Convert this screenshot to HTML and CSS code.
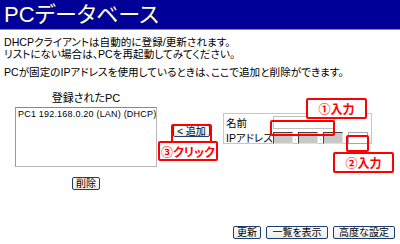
FILE: index.html
```html
<!DOCTYPE html>
<html lang="ja">

<head>
    <meta charset="UTF-8">
    <meta name="viewport" content="width=device-width, initial-scale=1.0">
    <title>PCデータベース</title>
    <link rel="stylesheet" href="styles.css">
</head>

<body>
    <div class="banner">
        <h1>PCデータベース</h1>
    </div>

    <div class="intro">
        <p>DHCPクライアントは自動的に登録/更新されます。<br>リストにない場合は、PCを再起動してみてください。</p>
        <p>PCが固定のIPアドレスを使用しているときは、ここで追加と削除ができます。</p>
    </div>

    <div class="editor">
        <div class="list-col">
            <div class="list-title">登録されたPC</div>
            <div class="listbox">PC1 192.168.0.20 (LAN) (DHCP)</div>
            <button class="btn delete-button">削除</button>
        </div>
        <div class="add-col">
            <button class="btn add-button">&lt; 追加</button>
        </div>
        <div class="entry">
            <div class="entry-row">
                <span class="entry-label">名前</span>
                <input class="name-input" type="text">
            </div>
            <div class="entry-row">
                <span class="entry-label">IPアドレス</span>
                <input class="ip-input fixed" type="text" disabled>
                <span class="dot">.</span>
                <input class="ip-input fixed" type="text" disabled>
                <span class="dot">.</span>
                <input class="ip-input fixed" type="text" disabled>
                <span class="dot"></span>
                <input class="ip-input" type="text">
            </div>
        </div>
    </div>

    <div class="actions">
        <button class="btn">更新</button>
        <button class="btn wide">一覧を表示</button>
        <button class="btn wide">高度な設定</button>
    </div>

    <!-- annotations drawn over the form -->
    <div class="mark mark-add"></div>
    <div class="mark mark-name"></div>
    <div class="mark mark-ip"></div>
    <div class="note note-name">①入力</div>
    <div class="note note-ip">②入力</div>
    <div class="note note-add">③クリック</div>
</body>

</html>
```

FILE: styles.css
```css
body {
    font-family: 'Liberation Sans', 'Noto Sans CJK JP', sans-serif;
    font-size: 11px;
    color: #000;
    background-color: #fff;
    margin: 0;
    padding: 0;
    width: 400px;
    height: 244px;
    overflow: hidden;
}

.banner {
    height: 29px;
    background-color: #000099;
    border-bottom: 1px solid #8080cc;
}

.banner h1 {
    margin: 0;
    padding-left: 4px;
    font-size: 22px;
    font-weight: normal;
    line-height: 29px;
    color: #ffffc8;
    font-feature-settings: "palt";
}

.intro {
    padding: 6px 0 0 4px;
    font-size: 10.6px;
}

.intro p {
    margin: 0 0 6px 0;
    line-height: 12px;
    white-space: nowrap;
    font-feature-settings: "palt";
}

.editor {
    display: flex;
    align-items: flex-start;
    margin-top: 14px;
    padding-left: 15px;
}

.list-col {
    width: 142px;
    flex-shrink: 0;
    display: flex;
    flex-direction: column;
    align-items: center;
}

.list-title {
    line-height: 12px;
    margin-bottom: 3px;
    font-size: 11px;
    font-feature-settings: "palt";
}

.listbox {
    box-sizing: border-box;
    width: 142px;
    height: 60px;
    border: 1px solid #b8b8b8;
    border-top-color: #888;
    border-left-color: #999;
    padding: 0 2px;
    font-size: 9px;
    letter-spacing: 0.2px;
    line-height: 12px;
    white-space: nowrap;
    overflow: hidden;
    align-self: stretch;
}

.delete-button {
    margin-top: 10px;
}

.add-col {
    margin: 33px 0 0 16px;
    flex-shrink: 0;
}

.btn {
    box-sizing: border-box;
    height: 13px;
    padding: 0 3px;
    font-family: 'Liberation Sans', 'Noto Sans CJK JP', sans-serif;
    font-size: 10px;
    line-height: 11px;
    color: #000;
    background: linear-gradient(#ffffff, #ecebe6);
    border: 1px solid #1c3f74;
    border-radius: 2px;
    white-space: nowrap;
    cursor: pointer;
    font-feature-settings: "palt";
}

.add-button {
    width: 37px;
    height: 12px;
}

.btn.wide {
    width: 62px;
}

.entry {
    box-sizing: border-box;
    width: 149px;
    height: 31px;
    flex-shrink: 0;
    margin: 21px 0 0 13px;
    padding: 2px 0 0 2px;
    border: 1px solid #c8c8bc;
}

.entry-row {
    display: flex;
    align-items: center;
    height: 13px;
}

.entry-row + .entry-row {
    margin-top: 2px;
}

.entry-label {
    width: 47px;
    flex-shrink: 0;
    font-size: 10.5px;
    white-space: nowrap;
    font-feature-settings: "palt";
}

.name-input {
    box-sizing: border-box;
    width: 62px;
    height: 13px;
    margin: 0;
    padding: 0;
    border: 1px solid #c0c0c0;
    background-color: #fff;
}

.ip-input {
    box-sizing: border-box;
    width: 20px;
    height: 12px;
    flex-shrink: 0;
    margin: 0;
    padding: 0;
    border: 1px solid #9aa8b8;
    background-color: #fff;
}

.ip-input.fixed {
    background-color: #c8c8c8;
    border-color: #404040 #e0e0e0 #e0e0e0 #404040;
}

.dot {
    width: 5px;
    flex-shrink: 0;
    font-size: 7px;
    line-height: 12px;
    align-self: flex-end;
    text-align: center;
    color: #666;
}

.actions {
    display: flex;
    justify-content: flex-end;
    gap: 5px;
    margin-top: 36px;
    padding-right: 5px;
}

.mark,
.note {
    position: absolute;
    box-sizing: border-box;
    border: 2px solid #ff0000;
    border-radius: 2px;
}

.note {
    background-color: #fff;
    color: #ff0000;
    font-family: 'Noto Sans CJK JP', sans-serif;
    font-size: 12px;
    font-weight: bold;
    white-space: nowrap;
    display: flex;
    align-items: center;
    justify-content: center;
    font-feature-settings: "palt";
}

.mark-add {
    left: 171px;
    top: 124px;
    width: 41px;
    height: 20px;
}

.mark-name {
    left: 270px;
    top: 120px;
    width: 65px;
    height: 16px;
}

.mark-ip {
    left: 346px;
    top: 135px;
    width: 23px;
    height: 17px;
}

.note-name {
    left: 306px;
    top: 98px;
    width: 61px;
    height: 21px;
}

.note-ip {
    left: 333px;
    top: 152px;
    width: 61px;
    height: 21px;
}

.note-add {
    left: 158px;
    top: 141px;
    width: 60px;
    height: 20px;
}
```
